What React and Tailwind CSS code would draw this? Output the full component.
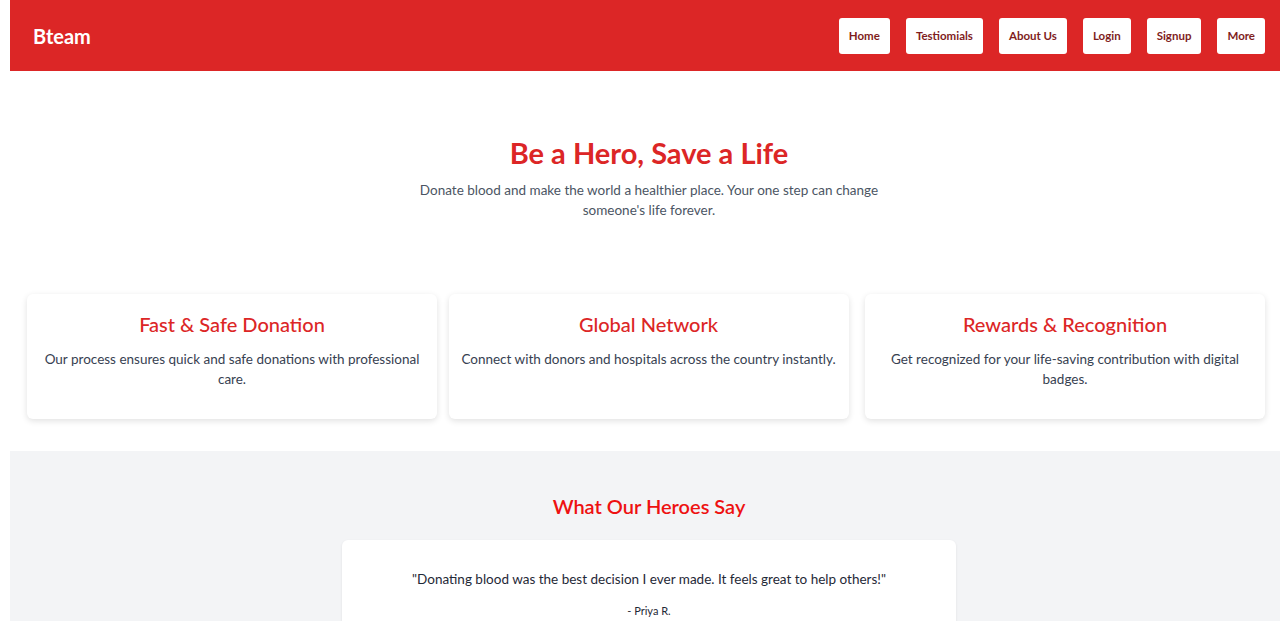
export default function App() {
  const nav = ["Home", "Testiomials", "About Us", "Login", "Signup", "More"];
  const cards = [
    { t: "Fast & Safe Donation", d: "Our process ensures quick and safe donations with professional care.", w: "w-[410px]" },
    { t: "Global Network", d: "Connect with donors and hospitals across the country instantly.", w: "w-[400px]" },
    { t: "Rewards & Recognition", d: "Get recognized for your life-saving contribution with digital badges.", w: "w-[400px]" },
  ];
  return (
    <div className="pl-[10px] bg-white min-h-[621px] overflow-hidden" style={{ fontFamily: 'Lato, "Open Sans", sans-serif' }}>
      <header className="h-[71px] bg-[#dc2626] flex items-center justify-between pl-[23px] pr-[15px]">
        <div className="text-white text-[20px] font-bold">Bteam</div>
        <nav className="flex gap-4">
          {nav.map((n) => (
            <button key={n} className="bg-white rounded-[3px] h-9 px-[10px] text-[11.5px] font-bold text-[#7f1d1d]">
              {n}
            </button>
          ))}
        </nav>
      </header>

      <section className="flex flex-col items-center pt-[65px] pl-2">
        <h1 className="text-[29px] leading-[34px] font-bold text-[#dc2626]">Be a Hero, Save a Life</h1>
        <p className="mt-[10px] max-w-[470px] text-center text-[13.5px] leading-[20px] text-[#4b5563]">
          Donate blood and make the world a healthier place. Your one step can change someone's life forever.
        </p>
      </section>

      <section className="flex justify-between pl-[17px] pr-[15px] mt-[74px]">
        {cards.map((c, i) => (
          <div key={c.t} className={`${c.w} h-[125px] bg-white rounded-md shadow-[0_2px_6px_rgba(0,0,0,0.12)] px-2 pt-[16px] text-center ${i === 1 ? "ml-[2px] mr-[7px]" : ""}`}>
            <h3 className="text-[20px] leading-[28px] font-medium text-[#dc2626]">{c.t}</h3>
            <p className="mt-[11px] text-[13.5px] leading-[20px] text-[#374151]">{c.d}</p>
          </div>
        ))}
      </section>

      <section className="mt-[32px] bg-[#f3f4f6] flex flex-col items-center pt-[42px] pb-10 pl-2">
        <h2 className="text-[20px] leading-[26px] font-semibold text-[#ee1111]">What Our Heroes Say</h2>
        <div className="mt-[21px] w-[614px] bg-white rounded-md shadow-[0_1px_3px_rgba(0,0,0,0.08)] pt-[30px] pb-6 text-center">
          <p className="text-[13.5px] leading-[18px] text-[#1f2937]">"Donating blood was the best decision I ever made. It feels great to help others!"</p>
          <p className="mt-[15px] text-[11px] text-[#1f2937]">- Priya R.</p>
        </div>
      </section>
    </div>
  );
}
